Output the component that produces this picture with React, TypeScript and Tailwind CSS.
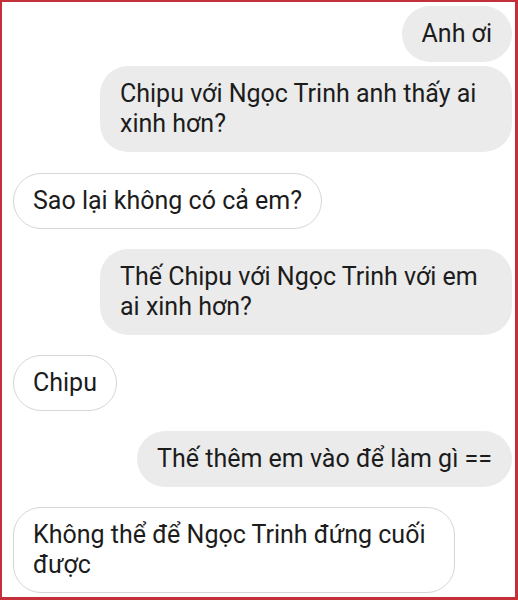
import React from "react";

const font = { fontFamily: "Roboto, 'Noto Sans', sans-serif" };

function Right({ children, w }: { children: React.ReactNode; w?: string }) {
  return (
    <div className="flex justify-end">
      <div
        className={`rounded-[28px] bg-[#ebebeb] px-5 py-[13px] text-[25px] leading-[30px] text-[#1c1c1c] ${w ?? ""}`}
      >
        {children}
      </div>
    </div>
  );
}

function Left({ children, w }: { children: React.ReactNode; w?: string }) {
  return (
    <div className="flex justify-start">
      <div
        className={`rounded-[28px] border border-[#d6d6d6] bg-white px-[19px] py-3 text-[25px] leading-[30px] text-[#1c1c1c] ${w ?? ""}`}
      >
        {children}
      </div>
    </div>
  );
}

export default function App() {
  return (
    <div
      style={font}
      className="box-border h-[600px] w-[518px] overflow-hidden border-t-2 border-l-2 border-r-[3px] border-b-[3px] border-[#c4303a] bg-white pt-1 pl-[11px] pr-[3px]"
    >
      <div className="flex flex-col">
        <Right>Anh ơi</Right>
        <div className="h-1" />
        <Right w="w-[412px]">
          Chipu với Ngọc Trinh anh thấy ai
          <br />
          xinh hơn?
        </Right>
        <div className="h-[21px]" />
        <Left>Sao lại không có cả em?</Left>
        <div className="h-5" />
        <Right w="w-[412px]">
          Thế Chipu với Ngọc Trinh với em
          <br />
          ai xinh hơn?
        </Right>
        <div className="h-5" />
        <Left>Chipu</Left>
        <div className="h-5" />
        <Right>Thế thêm em vào để làm gì ==</Right>
        <div className="h-5" />
        <Left w="w-[442px]">
          Không thể để Ngọc Trinh đứng cuối
          <br />
          được
        </Left>
      </div>
    </div>
  );
}
